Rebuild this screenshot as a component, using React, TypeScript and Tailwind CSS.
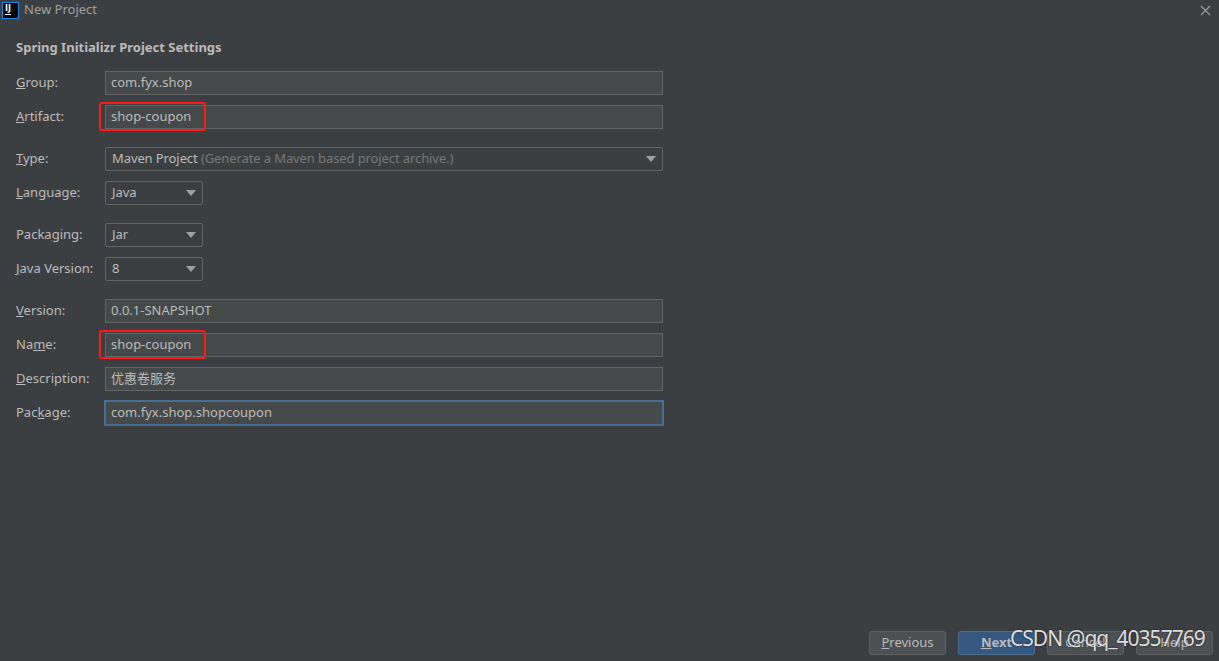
import { ReactNode } from 'react'

const font = { fontFamily: '"Noto Sans", "Noto Sans CJK SC", sans-serif' }

function Label({ children }: { children: ReactNode }) {
  return <div className="w-[89px] shrink-0 text-[13px] text-[#bbbbbb]">{children}</div>
}

function TextField({ value, focused, marked }: { value: string; focused?: boolean; marked?: boolean }) {
  return (
    <div className="relative w-[558px]">
      <div
        className={
          focused
            ? 'h-[26px] -mx-px -my-px flex items-center border-2 border-[#466d94] bg-[#45494a] px-[5px] text-[13px] text-[#bbbbbb]'
            : 'h-[24px] flex items-center border border-[#646464] bg-[#45494a] px-[5px] text-[13px] text-[#bbbbbb]'
        }
      >
        {value}
      </div>
      {marked && (
        <div className="absolute left-[-6px] top-[-3px] w-[107px] h-[29px] rounded-[3px] border-2 border-[#ff1a1a]" />
      )}
    </div>
  )
}

function Arrow() {
  return (
    <svg width="10" height="6" viewBox="0 0 10 6" className="shrink-0">
      <path d="M0 0 L10 0 L5 6 Z" fill="#a0a0a0" />
    </svg>
  )
}

function Combo({ value, hint, wide }: { value: string; hint?: string; wide?: boolean }) {
  return (
    <div
      className={
        (wide ? 'w-[558px] ' : 'w-[98px] ') +
        'h-[24px] flex items-center justify-between border border-[#646464] rounded-[2px] bg-[#3c3f41] pl-[6px] pr-[6px] text-[13px]'
      }
    >
      <span className="text-[#bbbbbb] whitespace-nowrap tracking-[-0.1px]">
        {value}
        {hint && <span className="text-[#787878]"> {hint}</span>}
      </span>
      <Arrow />
    </div>
  )
}

function Row({ label, children, gap }: { label: ReactNode; children: ReactNode; gap: string }) {
  return (
    <div className={'flex items-center ' + gap}>
      <Label>{label}</Label>
      {children}
    </div>
  )
}

function Button({ children, primary }: { children: ReactNode; primary?: boolean }) {
  return (
    <div
      className={
        primary
          ? 'w-[77px] h-[24px] flex items-center justify-center rounded-[3px] border border-[#4c708c] bg-[#365880] text-[13px] font-bold text-[#bbbbbb]'
          : 'w-[77px] h-[24px] flex items-center justify-center rounded-[3px] border border-[#5e6060] bg-[#4c5052] text-[13px] text-[#bbbbbb]'
      }
    >
      {children}
    </div>
  )
}

export default function App() {
  return (
    <div className="relative h-[661px] w-[1219px] overflow-hidden bg-[#3c3f41] flex flex-col" style={font}>
      {/* Title bar */}
      <div className="h-[20px] flex items-center justify-between pl-[2px] pr-[8px]">
        <div className="flex items-center gap-[5px]">
          <div className="w-[17px] h-[17px] bg-black border border-[#1e88e5] flex flex-col justify-start px-[2px] pt-[1px]">
            <span className="text-[8px] leading-[9px] font-bold text-white" style={{ fontFamily: '"DejaVu Sans", sans-serif' }}>IJ</span>
            <span className="mt-[1px] w-[6px] h-[1px] bg-white" />
          </div>
          <span className="text-[13px] text-[#a0a0a0]">New Project</span>
        </div>
        <svg width="11" height="11" viewBox="0 0 11 11">
          <path d="M1 1 L10 10 M10 1 L1 10" stroke="#9a9a9a" strokeWidth="1.3" />
        </svg>
      </div>

      {/* Form */}
      <div className="pl-[16px] pt-[17px] flex flex-col">
        <div className="text-[13px] font-bold text-[#bbbbbb] leading-[20px]">Spring Initializr Project Settings</div>

        <Row label={<><u>G</u>roup:</>} gap="mt-[14px]">
          <TextField value="com.fyx.shop" />
        </Row>
        <Row label={<><u>A</u>rtifact:</>} gap="mt-[10px]">
          <TextField value="shop-coupon" marked />
        </Row>
        <Row label={<><u>T</u>ype:</>} gap="mt-[18px]">
          <Combo wide value="Maven Project" hint="(Generate a Maven based project archive.)" />
        </Row>
        <Row label={<><u>L</u>anguage:</>} gap="mt-[10px]">
          <Combo value="Java" />
        </Row>
        <Row label={<>Packa<u>g</u>ing:</>} gap="mt-[18px]">
          <Combo value="Jar" />
        </Row>
        <Row label={<><u>J</u>ava Version:</>} gap="mt-[10px]">
          <Combo value="8" />
        </Row>
        <Row label={<><u>V</u>ersion:</>} gap="mt-[18px]">
          <TextField value="0.0.1-SNAPSHOT" />
        </Row>
        <Row label={<>Na<u>m</u>e:</>} gap="mt-[10px]">
          <TextField value="shop-coupon" marked />
        </Row>
        <Row label={<><u>D</u>escription:</>} gap="mt-[10px]">
          <TextField value="优惠卷服务" />
        </Row>
        <Row label={<>Pac<u>k</u>age:</>} gap="mt-[10px]">
          <TextField value="com.fyx.shop.shopcoupon" focused />
        </Row>
      </div>

      {/* Buttons */}
      <div className="mt-auto flex justify-end gap-[12px] pr-[6px] pb-[6px]">
        <Button><u>P</u>revious</Button>
        <Button primary><u>N</u>ext</Button>
        <Button>Cancel</Button>
        <Button>Help</Button>
      </div>

      {/* Watermark */}
      <div
        className="absolute left-[1010px] top-[624px] text-[21px] leading-[28px] tracking-[-1px] text-[#dcdcdc] whitespace-nowrap"
        style={{ textShadow: '0 0 2px rgba(0,0,0,0.6)' }}
      >
        CSDN @qq_40357769
      </div>
    </div>
  )
}
